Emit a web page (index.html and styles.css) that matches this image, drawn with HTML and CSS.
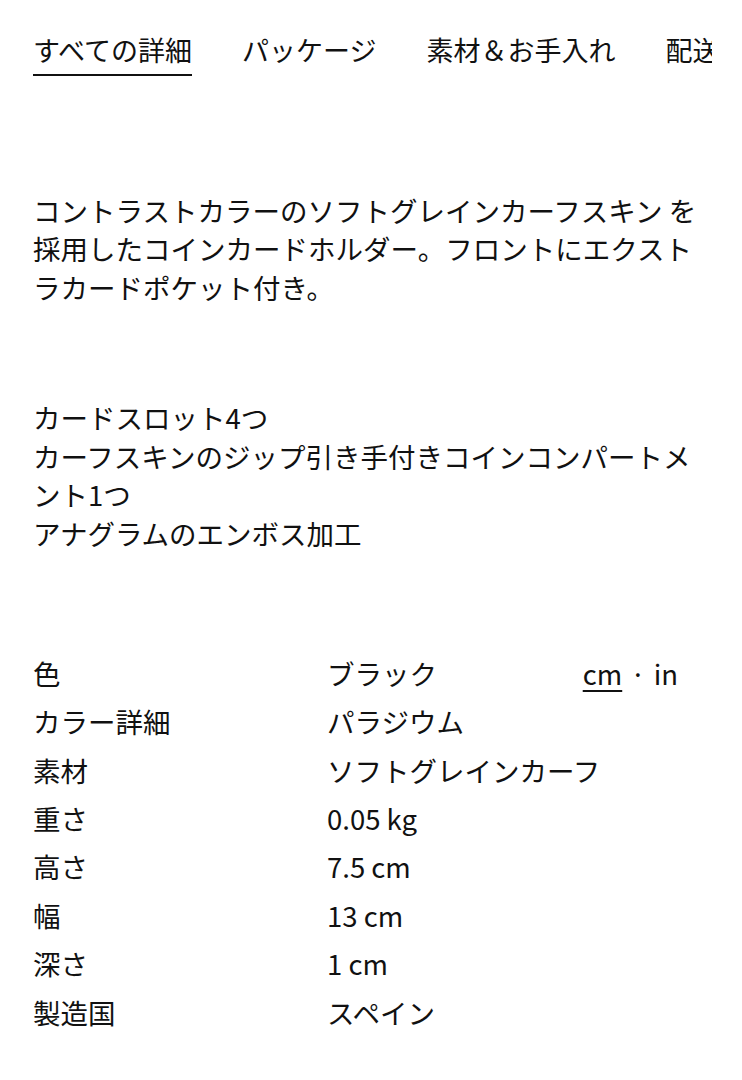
FILE: index.html
```html
<!DOCTYPE html>
<html lang="ja">
<head>
<meta charset="utf-8">
<link rel="stylesheet" href="styles.css">
</head>
<body>
<div class="page">
  <nav class="tabs">
    <span class="tab active">すべての詳細</span>
    <span class="tab">パッケージ</span>
    <span class="tab">素材＆お手入れ</span>
    <span class="tab">配送</span>
  </nav>
  <p class="desc">コントラストカラーのソフトグレインカーフスキン を採用したコインカードホルダー。フロントにエクストラカードポケット付き。</p>
  <p class="features">カードスロット4つ<br>カーフスキンのジップ引き手付きコインコンパートメント1つ<br>アナグラムのエンボス加工</p>
  <div class="specs">
    <div class="row"><span class="label">色</span><span class="value">ブラック</span><span class="units"><span class="unit-on">cm</span><span class="sep">·</span>in</span></div>
    <div class="row"><span class="label">カラー詳細</span><span class="value">パラジウム</span></div>
    <div class="row"><span class="label">素材</span><span class="value">ソフトグレインカーフ</span></div>
    <div class="row"><span class="label">重さ</span><span class="value">0.05 kg</span></div>
    <div class="row"><span class="label">高さ</span><span class="value">7.5 cm</span></div>
    <div class="row"><span class="label">幅</span><span class="value">13 cm</span></div>
    <div class="row"><span class="label">深さ</span><span class="value">1 cm</span></div>
    <div class="row"><span class="label">製造国</span><span class="value">スペイン</span></div>
  </div>
</div>
</body>
</html>
```
FILE: styles.css
```css
html, body {
  margin: 0;
  padding: 0;
  background: #fff;
}
body {
  font-family: "Noto Sans CJK JP", "Noto Sans", sans-serif;
  color: #111;
  font-size: 27.5px;
  line-height: 38.8px;
  overflow: hidden;
}
.page {
  padding: 31px 33px 0 33px;
  width: 742px;
  box-sizing: border-box;
}
.tabs {
  display: flex;
  gap: 50px;
  white-space: nowrap;
  overflow: hidden;
  margin-right: -3px;
}
.tab {
  font-size: 27px;
  line-height: 38.5px;
  padding-bottom: 4px;
  border-bottom: 2.5px solid transparent;
  flex: none;
}
.tab.active {
  border-bottom-color: #111;
}
.desc {
  margin: 115px 0 0 0;
}
.features {
  margin: 91px 0 0 0;
}
.specs {
  margin-top: 96px;
}
.row {
  display: grid;
  grid-template-columns: 294px 1fr auto;
  height: 48.4px;
  align-items: center;
}
.units {
  padding-right: 31px;
}
.unit-on {
  text-decoration: underline;
  text-decoration-thickness: 2px;
  text-underline-offset: 5px;
}
.sep {
  margin: 0 8px;
}
```
